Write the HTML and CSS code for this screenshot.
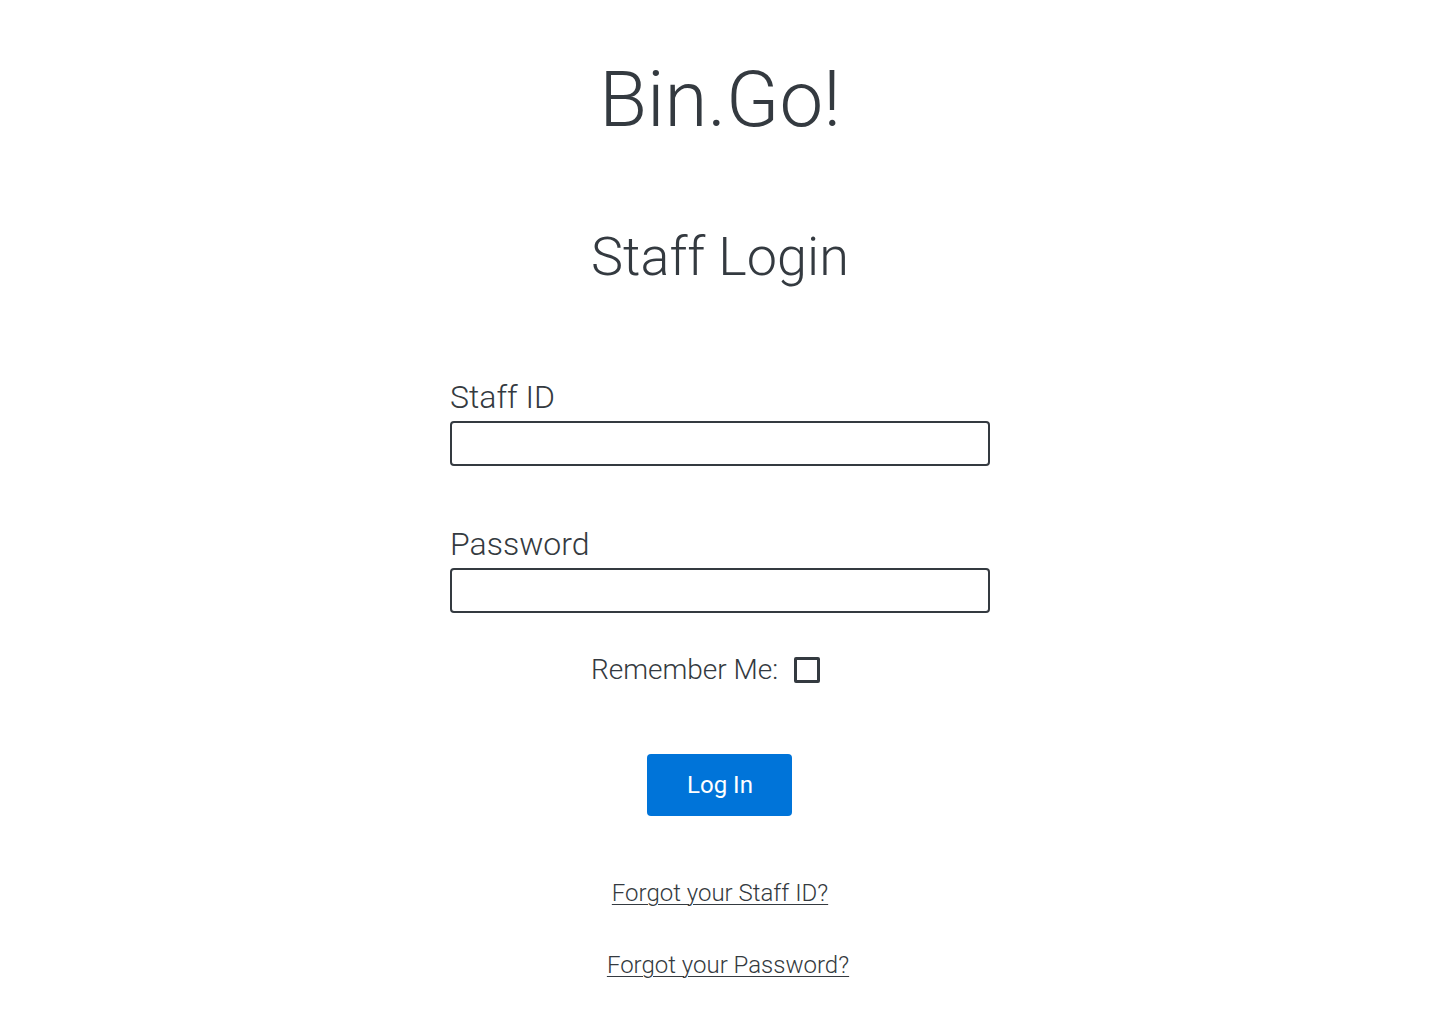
FILE: index.html
```html
<!DOCTYPE html>
<html lang="en">
<head>
<meta charset="utf-8">
<title>Bin.Go! Staff Login</title>
<link rel="stylesheet" href="styles.css">
</head>
<body>
<main class="page">
  <h1 class="brand">Bin.Go!</h1>
  <h2 class="heading">Staff Login</h2>
  <form class="form">
    <label class="label" for="staff-id">Staff ID</label>
    <input class="input" id="staff-id" type="text">
    <label class="label label-gap" for="password">Password</label>
    <input class="input" id="password" type="password">
    <div class="remember">
      <span class="remember-text">Remember Me:</span>
      <span class="checkbox"></span>
    </div>
    <button class="btn" type="button">Log In</button>
    <a class="link link-first" href="#">Forgot your Staff ID?</a>
    <a class="link link-second" href="#">Forgot your Password?</a>
  </form>
</main>
</body>
</html>
```

FILE: styles.css
```css
html, body {
  margin: 0;
  padding: 0;
  background: #ffffff;
}
body {
  font-family: Roboto, "Liberation Sans", sans-serif;
  font-weight: 300;
  color: #343a40;
}
.page {
  display: flex;
  flex-direction: column;
  align-items: center;
}
.brand {
  margin: 53px 0 0;
  font-size: 78px;
  line-height: 94px;
  font-weight: 300;
}
.heading {
  margin: 77px 0 0;
  font-size: 54px;
  line-height: 65px;
  font-weight: 300;
}
.form {
  width: 540px;
  display: flex;
  flex-direction: column;
  margin-top: 89px;
}
.label {
  font-size: 32px;
  line-height: 38px;
  margin-bottom: 5px;
}
.label-gap {
  margin-top: 59px;
}
.input {
  box-sizing: border-box;
  width: 540px;
  height: 45px;
  margin: 0;
  border: 2px solid #343a40;
  border-radius: 4px;
  background: #fff;
  padding: 0 10px;
  font: inherit;
}
.remember {
  display: flex;
  align-items: center;
  justify-content: center;
  margin-top: 41px;
  height: 32px;
}
.remember-text {
  font-size: 28px;
  line-height: 32px;
}
.checkbox {
  box-sizing: border-box;
  width: 26px;
  height: 26px;
  border: 3px solid #343a40;
  border-radius: 2px;
  margin-left: 16px;
  margin-right: 29px;
}
.btn {
  align-self: center;
  margin-top: 68px;
  margin-right: 1px;
  width: 145px;
  height: 62px;
  border: none;
  border-radius: 4px;
  background: #0074d9;
  color: #ffffff;
  font-family: Roboto, "Liberation Sans", sans-serif;
  font-weight: 400;
  font-size: 24px;
  padding: 0 0 0 1px;
}
.link {
  align-self: center;
  color: #343a40;
  font-size: 24px;
  line-height: 32px;
  text-decoration: underline;
  text-underline-offset: 3px;
  text-decoration-thickness: 1px;
}
.link-first {
  margin-top: 61px;
}
.link-second {
  margin-top: 40px;
  margin-left: 16px;
}
```
